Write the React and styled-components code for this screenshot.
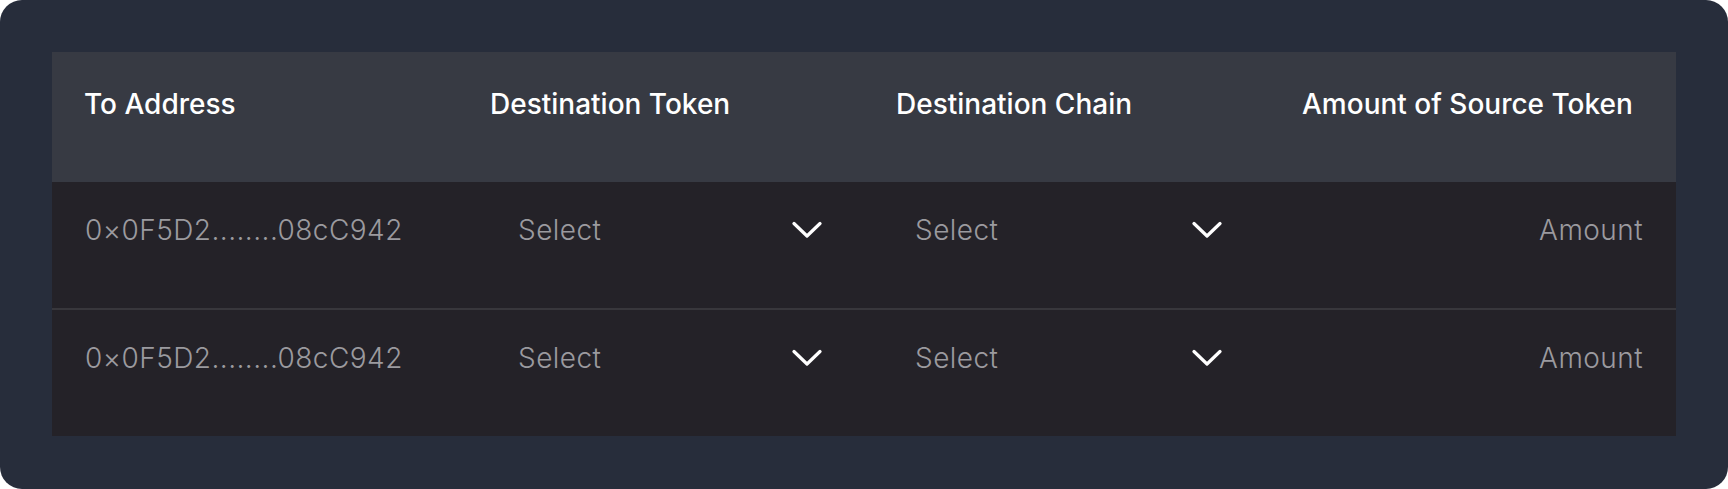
import React from 'react';
import styled, { createGlobalStyle } from 'styled-components';

const GlobalStyle = createGlobalStyle`
  html, body {
    margin: 0;
    padding: 0;
    background: #ffffff;
  }

  body {
    font-family: Inter, "Noto Sans", sans-serif;
  }
`;

const Card = styled.section`
  box-sizing: border-box;
  width: 1728px;
  height: 489px;
  padding: 52px 52px 53px;
  border-radius: 22px;
  background-color: #272d3b;
`;

const Table = styled.div`
  display: flex;
  flex-direction: column;
  height: 100%;
  background-color: #242228;
`;

const HeaderRow = styled.div`
  display: grid;
  grid-template-columns: repeat(4, 1fr);
  height: 130px;
  background-color: #373a43;
`;

const HeaderCell = styled.div`
  padding: 32px 32px 0;
  color: #ffffff;
  font-size: 28px;
  font-weight: 500;
  line-height: 40px;
`;

const BodyRow = styled.div`
  display: grid;
  grid-template-columns: 433px 397px 397px 1fr;
  flex: 1;
  align-items: start;
  padding-top: 28px;

  & + & {
    border-top: 2px solid #38373c;
  }
`;

const Cell = styled.div`
  padding: 0 33px;
  color: #9b9a9f;
  font-size: 28px;
  font-weight: 300;
  letter-spacing: 0.45px;
  line-height: 40px;
  text-align: ${({ $align }) => $align || 'left'};
`;

const SelectBox = styled.div`
  display: flex;
  align-items: center;
  justify-content: space-between;
  padding-right: ${({ $inset }) => $inset}px;
  cursor: pointer;
`;

const Chevron = () => (
  <svg width="30" height="18" viewBox="0 0 30 18" fill="none">
    <path
      d="M2 2.5L15 15L28 2.5"
      stroke="#ffffff"
      strokeWidth="3.2"
      strokeLinecap="round"
      strokeLinejoin="round"
    />
  </svg>
);

const Select = ({ placeholder, inset = 27 }) => (
  <SelectBox $inset={inset}>
    <span>{placeholder}</span>
    <Chevron />
  </SelectBox>
);

const columns = ['To Address', 'Destination Token', 'Destination Chain', 'Amount of Source Token'];

const rows = [
  { id: 1, address: '0×0F5D2........08cC942' },
  { id: 2, address: '0×0F5D2........08cC942' }
];

const App = () => (
  <>
    <GlobalStyle />
    <Card>
      <Table>
        <HeaderRow>
          {columns.map(c => (
            <HeaderCell key={c}>{c}</HeaderCell>
          ))}
        </HeaderRow>
        {rows.map(r => (
          <BodyRow key={r.id}>
            <Cell>{r.address}</Cell>
            <Cell>
              <Select placeholder="Select" />
            </Cell>
            <Cell>
              <Select placeholder="Select" inset={24} />
            </Cell>
            <Cell $align="right">Amount</Cell>
          </BodyRow>
        ))}
      </Table>
    </Card>
  </>
);

export default App;
